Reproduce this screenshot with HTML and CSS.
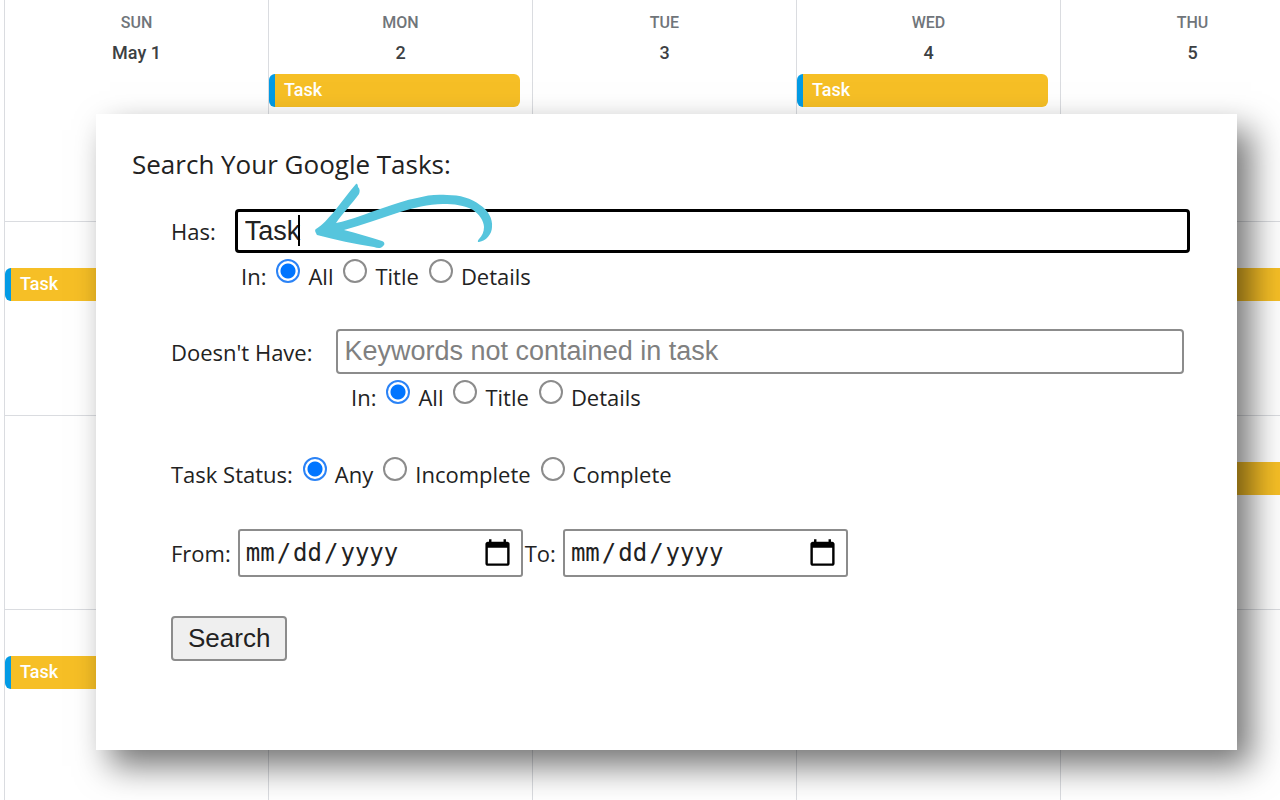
FILE: index.html
```html
<!DOCTYPE html>
<html lang="en">
<head>
  <meta charset="UTF-8">
  <meta name="viewport" content="width=device-width, initial-scale=1.0">
  <title>Search Your Google Tasks</title>
  <link rel="stylesheet" href="styles.css">
</head>
<body>
  <div class="calendar">
    <div class="day first"><span class="weekday">SUN</span><span class="date">May 1</span></div>
    <div class="day first"><span class="weekday">MON</span><span class="date">2</span><div class="event">Task</div></div>
    <div class="day first"><span class="weekday">TUE</span><span class="date">3</span></div>
    <div class="day first"><span class="weekday">WED</span><span class="date">4</span><div class="event">Task</div></div>
    <div class="day first"><span class="weekday">THU</span><span class="date">5</span></div>

    <div class="day"><div class="event">Task</div></div>
    <div class="day"></div>
    <div class="day"></div>
    <div class="day"></div>
    <div class="day"><div class="event"></div></div>

    <div class="day"></div>
    <div class="day"></div>
    <div class="day"></div>
    <div class="day"></div>
    <div class="day"><div class="event"></div></div>

    <div class="day"><div class="event">Task</div></div>
    <div class="day"></div>
    <div class="day"></div>
    <div class="day"></div>
    <div class="day"></div>
  </div>

  <div class="panel">
    <h1>Search Your Google Tasks:</h1>
    <form>
      <div class="row">
        <label for="has">Has:</label>
        <div class="field">
          <input type="text" id="has" class="text active" value="Task">
          <span class="caret"></span>
          <svg class="arrow" viewBox="0 0 184 70" width="184" height="70" aria-hidden="true">
            <path fill="#56c5dd" d="M45 4 C46 3 47 5 47 7 C49 9 49 11 48 14 C40 25 32 33 25 43 C41 40 56 33 72 28 C84 24 95 20 106 18 C116 15 126 14 136 15 C149 15 160 18 169 25 C177 30 182 39 181 47 C181 54 175 61 168 62 C166 62 167 60 168 59 C171 56 173 52 173 47 C173 41 168 34 162 30 C153 25 143 24 132 24 C117 24 103 28 89 32 C70 38 51 45 33 50 C46 53 58 57 71 61 C74 62 74 65 72 66 C70 69 66 68 63 67 C43 64 25 60 6 55 C5 53 3 50 5 49 C12 45 17 38 22 33 C30 23 37 13 45 4 Z"/>
          </svg>
        </div>
      </div>
      <div class="radios in-has">
        <span>In:</span>
        <label><input type="radio" name="has-in" checked>All</label>
        <label><input type="radio" name="has-in">Title</label>
        <label><input type="radio" name="has-in">Details</label>
      </div>

      <div class="row not-row">
        <label for="not">Doesn't Have:</label>
        <div class="field">
          <input type="text" id="not" class="text" placeholder="Keywords not contained in task">
        </div>
      </div>
      <div class="radios in-not">
        <span>In:</span>
        <label><input type="radio" name="not-in" checked>All</label>
        <label><input type="radio" name="not-in">Title</label>
        <label><input type="radio" name="not-in">Details</label>
      </div>

      <div class="radios status">
        <span>Task Status:</span>
        <label><input type="radio" name="status" checked>Any</label>
        <label><input type="radio" name="status">Incomplete</label>
        <label><input type="radio" name="status">Complete</label>
      </div>

      <div class="dates">
        <label for="from">From:</label>
        <input type="date" id="from">
        <label for="to">To:</label>
        <input type="date" id="to">
      </div>

      <button type="button">Search</button>
    </form>
  </div>
</body>
</html>
```
FILE: styles.css
```css
* {
  box-sizing: border-box;
}
body {
  margin: 0;
  height: 100vh;
  overflow: hidden;
  position: relative;
  background: #fff;
  font-family: "Open Sans", "Noto Sans", sans-serif;
  color: #222;
}

/* calendar behind the panel */
.calendar {
  display: grid;
  grid-template-columns: repeat(5, 1fr);
  grid-template-rows: 221px;
  grid-auto-rows: 194px;
  margin: 0 -44px 0 4px;
  font-family: Roboto, sans-serif;
  font-weight: 500;
}
.day {
  border-left: 1px solid #dadce0;
  border-top: 1px solid #dadce0;
  padding: 46px 12px 0 0;
}
.day.first {
  border-top: none;
  padding-top: 12px;
}
.weekday, .date {
  display: block;
  margin-right: -12px;
  text-align: center;
}
.weekday {
  font-size: 16px;
  line-height: 21px;
  color: #70757a;
}
.date {
  font-size: 18px;
  line-height: 20px;
  margin-top: 10px;
  margin-bottom: 11px;
  color: #3c4043;
}
.event {
  height: 33px;
  border-left: 6px solid #039be5;
  border-radius: 6px;
  background: #f6bf26;
  color: #fff;
  font-size: 18px;
  line-height: 31px;
  padding-left: 9px;
}

/* search panel */
.panel {
  position: absolute;
  top: 114px;
  left: 96px;
  right: 43px;
  padding: 30px 47px 89px 36px;
  background: #fff;
  box-shadow: 14px 16px 32px rgba(0, 0, 0, 0.55);
}
h1 {
  margin: 0 0 25px;
  font-size: 26px;
  line-height: 40px;
  font-weight: 400;
}
form {
  padding-left: 39px;
  font-size: 22px;
}
.row {
  display: flex;
  align-items: center;
  gap: 19px;
}
.field {
  position: relative;
  flex: 1;
}
.text {
  display: block;
  width: 100%;
  height: 44px;
  padding: 0 7px;
  border: 2px solid #8c8c8c;
  border-radius: 4px;
  font-family: "Liberation Sans", Arial, sans-serif;
  font-size: 27px;
  color: #222;
}
.text::placeholder {
  color: #808080;
}
.text.active {
  border: 3px solid #000;
  outline: none;
}
.caret {
  position: absolute;
  left: 63px;
  top: 6px;
  width: 2px;
  height: 31px;
  background: #000;
}
.arrow {
  position: absolute;
  left: 76px;
  top: -29px;
}
.radios {
  display: flex;
  align-items: flex-start;
  gap: 10px;
  margin-top: 6px;
  line-height: 34px;
}
.radios label {
  display: flex;
  gap: 8px;
}
.radios input {
  appearance: none;
  width: 24px;
  height: 24px;
  margin: 0;
  border: 2px solid #8c8c8c;
  border-radius: 50%;
  background: #fff;
}
.radios input:checked {
  border-color: #2b83f6;
  background: radial-gradient(circle, #0075ff 7px, #fff 8px);
}
.in-has {
  padding-left: 70px;
}
.in-not {
  padding-left: 180px;
}
.not-row {
  gap: 24px;
  margin-top: 36px;
  padding-right: 6px;
}
.not-row .text {
  height: 45px;
  padding: 0 6px;
}
.status {
  margin-top: 43px;
}
.dates {
  display: flex;
  align-items: center;
  gap: 2px;
  margin: 38px 0 39px;
}
.dates label {
  padding-right: 5px;
}
.dates input {
  width: 285px;
  height: 48px;
  padding: 0 8px 0 5px;
  border: 2px solid #8c8c8c;
  border-radius: 3px;
  background: #fff;
  font-family: "DejaVu Sans Mono", monospace;
  font-size: 24px;
  color: #222;
}
.dates input::-webkit-datetime-edit-text {
  padding: 0 1px;
}
.dates input::-webkit-calendar-picker-indicator {
  width: 31px;
  height: 31px;
  padding: 0;
}
button {
  display: block;
  height: 45px;
  padding: 0 15px;
  border: 2px solid #8c8c8c;
  border-radius: 4px;
  background: #efefef;
  font-family: "Liberation Sans", Arial, sans-serif;
  font-size: 26px;
  color: #222;
}
```
